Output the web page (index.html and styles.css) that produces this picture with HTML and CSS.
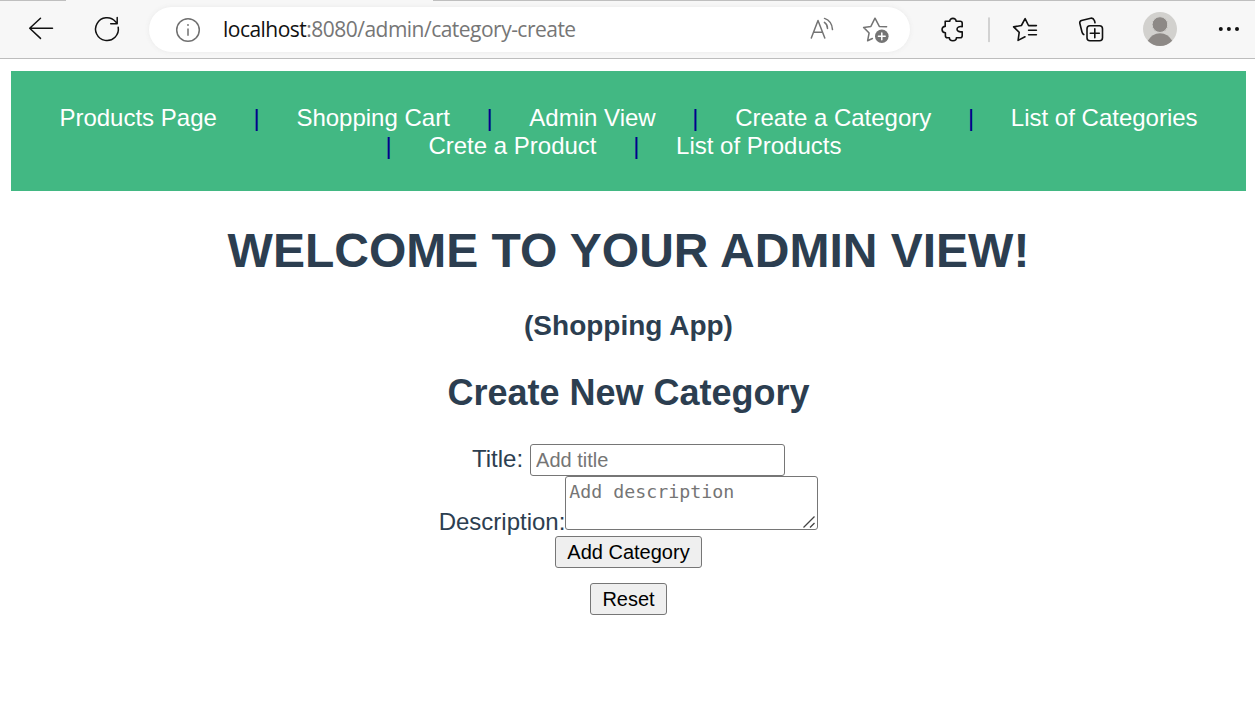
FILE: index.html
```
<!DOCTYPE html>
<html lang="en">
<head>
<meta charset="utf-8">
<title>Create Category</title>
<link rel="stylesheet" href="styles.css">
</head>
<body>
<header class="toolbar">
  <span class="tab-edge tab-edge-left"></span>
  <span class="tab-edge tab-edge-right"></span>
  <svg class="browser-icons" width="149" height="58" viewBox="0 0 149 58" fill="none" stroke="#111" stroke-width="1.5" stroke-linecap="round" stroke-linejoin="round">
    <path d="M52.5 28.3H29.7M40.5 18.2L29.7 28.3L40.5 38.4"/>
    <path d="M118.2 27.2A11.4 11.4 0 1 1 115.6 21.7L117.2 23.4M117.2 17.5V23.7H110.7"/>
  </svg>
  <div class="address">
    <svg class="info" width="26" height="26" viewBox="0 0 26 26" fill="none" stroke="#707070" stroke-width="1.5">
      <circle cx="13" cy="13" r="11.3"/><path d="M13 11.5V18.7"/><circle cx="13" cy="8" r=".9" fill="#707070" stroke="none"/>
    </svg>
    <span class="url"><span class="host">localhost</span>:8080/admin/category-create</span>
    <svg class="address-icons" width="100" height="45" viewBox="810 7 100 45" fill="none" stroke="#747474" stroke-width="1.5" stroke-linecap="round" stroke-linejoin="round">
      <path d="M811.3 38L818 20.5L824.8 38M813.5 32.3H822.5"/>
      <path d="M824.4 22.4Q827.5 24.4 827.5 28.4M824.5 18.4Q832 21 832.5 29.6"/>
      <path d="M886.6 26.7L879.3 26.4L875 18.2L870.9 26.4L863.6 27.4L869.1 33L867.6 40.8L872.4 38.5"/>
      <circle cx="881.8" cy="36.3" r="6.8" fill="#747474" stroke="none"/>
      <path d="M878.4 36.3H885.2M881.8 32.9V39.7" stroke="#fff"/>
    </svg>
  </div>
  <svg class="browser-icons" width="345" height="58" viewBox="910 0 345 58" fill="none" stroke="#111" stroke-width="1.6" stroke-linecap="round" stroke-linejoin="round">
    <path d="M945.2 21.3H949.8C949.5 17.4 956.4 17.4 956.1 21.3H960.2Q962.2 21.3 962.2 23.3V26.7C955.3 25.3 955.3 33 962.2 31.7V35.8Q962.2 37.8 960.2 37.8H956.4C956.4 41.8 949.4 41.8 949.4 37.8H947.4Q945.4 37.8 945.4 35.8V32.8C941 32.7 941 26.4 945.2 26.4Z"/>
    <path d="M989 18V41.5" stroke="#c8c8c8"/>
    <path d="M1031.5 25.5H1028.5L1025.1 18.6L1021.4 25.5L1013.6 26.9L1019.2 32.3L1018.1 40.4L1025 36.8M1028.6 25.6H1036.4M1028.6 30.2H1036.4M1028.6 34.8H1036.4"/>
    <path d="M1083.8 34.6Q1082.5 34 1082 32L1079.8 23.3Q1079.4 21.2 1081.5 20.5L1090.8 18.2Q1093.2 17.7 1094.5 20.8L1095 22.8"/>
    <rect x="1087" y="25.7" width="15.5" height="15" rx="3"/>
    <path d="M1094.8 28.7V37.7M1090.3 33.2H1099.3"/>
    <circle cx="1160" cy="29" r="17" fill="#d2d1ce" stroke="none"/>
    <path d="M1147.8 40.7Q1152 33.2 1160 33.2T1172.2 40.7Q1167 46 1160 46T1147.8 40.7Z" fill="#8d8986" stroke="none"/>
    <circle cx="1160" cy="24.6" r="7.9" fill="#8d8986" stroke="#d2d1ce" stroke-width="1"/>
    <g fill="#111" stroke="none"><circle cx="1220.8" cy="29" r="2"/><circle cx="1228.9" cy="29" r="2"/><circle cx="1237" cy="29" r="2"/></g>
  </svg>
</header>
<main class="page">
  <nav class="nav">
    <div class="nav-row">
      <a>Products Page</a><span>|</span><a>Shopping Cart</a><span>|</span><a>Admin View</a><span>|</span><a>Create a Category</a><span>|</span><a>List of Categories</a>
    </div>
    <div class="nav-row nav-row-second">
      <span>|</span><a>Crete a Product</a><span>|</span><a>List of Products</a>
    </div>
  </nav>
  <h1>WELCOME TO YOUR ADMIN VIEW!</h1>
  <h3>(Shopping App)</h3>
  <h2>Create New Category</h2>
  <form class="form">
    <div class="field"><label for="title">Title:</label><input id="title" class="title-input" placeholder="Add title"></div>
    <div class="field field-description">
      <label for="description">Description:</label>
      <div class="area"><textarea id="description" class="description-input" placeholder="Add description"></textarea>
        <svg class="grip" width="14" height="14" viewBox="0 0 14 14" stroke="#444" stroke-width="1.3"><path d="M1.5 12.5L12.5 1.5M8 12.5L12.5 8"/></svg>
      </div>
    </div>
    <button type="button" class="add">Add Category</button>
    <button type="button" class="reset">Reset</button>
  </form>
</main>
</body>
</html>
```
FILE: styles.css
```
* { box-sizing: border-box; }
body { margin: 0; background: #fff; color: #2c3e50; font: 24px/28px "Liberation Sans", Arial, sans-serif; overflow: hidden; }
.toolbar { position: relative; display: flex; height: 59px; background: #f7f7f7; border-bottom: 1px solid #bdbdbd; }
.tab-edge { position: absolute; top: 0; height: 1px; background: #bfbfbf; }
.tab-edge-left { left: 0; width: 66px; }
.tab-edge-right { left: 433px; right: 0; }
.browser-icons { flex: none; display: block; }
.address { flex: none; display: flex; align-items: center; width: 761px; height: 45px; margin-top: 7px; padding-left: 26px; border-radius: 23px; background: #fff; box-shadow: 0 0 5px #e9e9e9; }
.info { flex: none; }
.url { margin: 0 0 1px 22px; color: #767676; font: 21px/30px "Open Sans", "Noto Sans", sans-serif; letter-spacing: -0.52px; white-space: nowrap; }
.host { color: #111; }
.address-icons { flex: none; margin-left: auto; }
.page { padding: 12px 9px 0 11px; text-align: center; }
.nav { height: 120px; padding-top: 32px; background: #42b883; color: #fff; }
.nav-row { display: flex; justify-content: center; gap: 36.67px; height: 28px; line-height: 29px; white-space: nowrap; }
.nav-row span { color: #00008b; }
.nav-row-second { padding-right: 30px; }
h1, h2, h3 { margin: 0; white-space: nowrap; }
h1 { margin-top: 32px; font-size: 48px; line-height: 55px; }
h3 { margin-top: 32px; font-size: 28px; line-height: 32px; }
h2 { margin-top: 30px; font-size: 36px; line-height: 41px; }
.form { display: flex; flex-direction: column; align-items: center; margin-top: 31px; }
.field { display: flex; height: 32px; line-height: 29px; }
.title-input { width: 255px; height: 32px; margin: 0 0 0 7px; padding: 1px 5px; border: 1px solid #767676; border-radius: 3px; font: 20px "Liberation Sans", Arial, sans-serif; }
.field-description { height: 54px; align-items: flex-end; line-height: 16px; }
.area { position: relative; height: 54px; }
.description-input { display: block; width: 253px; height: 54px; margin: 0; padding: 3px; border: 1px solid #767676; border-radius: 3px; resize: none; font: 18.27px/23px "DejaVu Sans Mono", monospace; }
input::placeholder, textarea::placeholder { color: #757575; }
.grip { position: absolute; right: 2px; bottom: 1px; fill: none; }
button { height: 32px; padding: 0; border: 1px solid #767676; border-radius: 3px; background: #efefef; color: #000; font: 20px "Liberation Sans", Arial, sans-serif; }
.add { width: 147px; margin-top: 6px; }
.reset { width: 77px; margin-top: 15px; }
```
